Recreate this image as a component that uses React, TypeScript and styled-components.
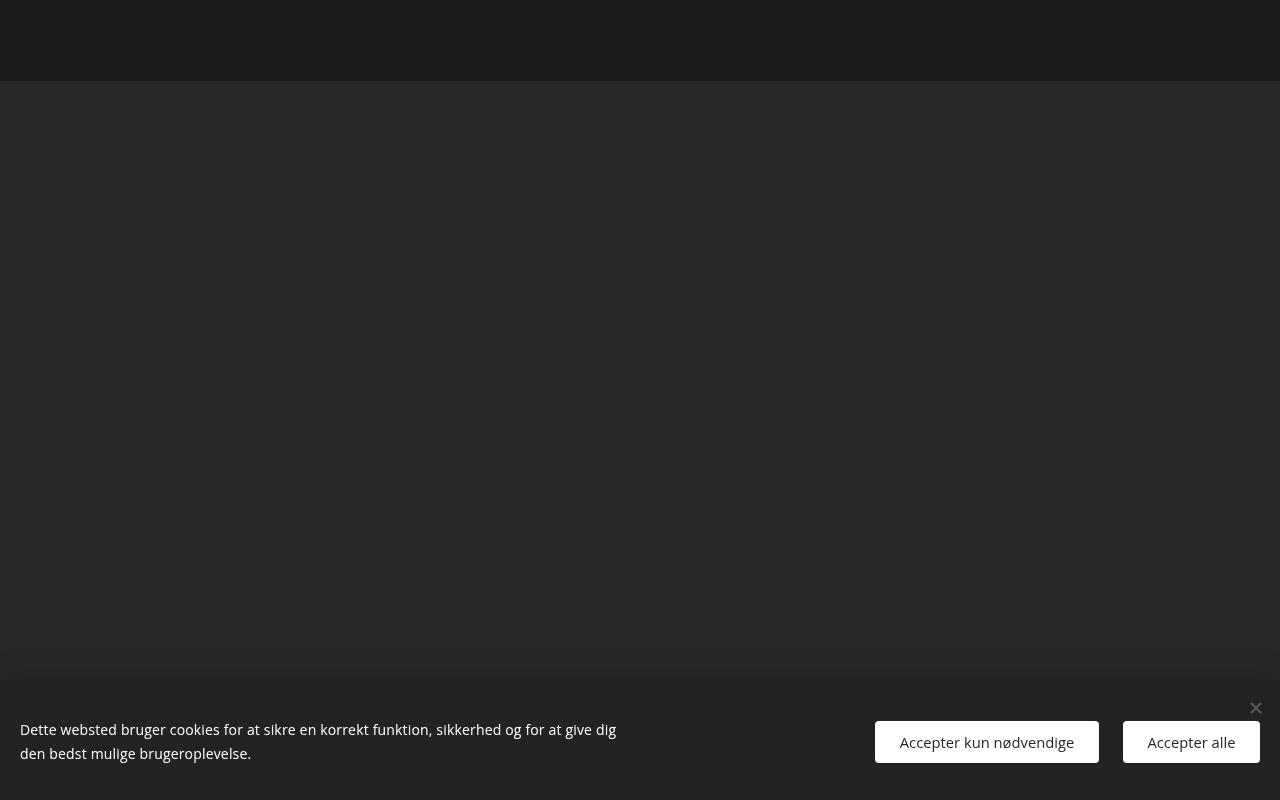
import React from 'react'
import styled, { createGlobalStyle } from 'styled-components'

const GlobalStyle = createGlobalStyle`
  html, body {
    margin: 0;
    padding: 0;
    background: #282828;
    font-family: "Open Sans", "Noto Sans", sans-serif;
  }
`

const App: React.FC = () => {
  return (
    <>
      <GlobalStyle />
      <StyledPage>
        <StyledHeader />
        <StyledMain />
      </StyledPage>
      <StyledCookieBar>
        <StyledCloseButton aria-label="Luk">
          <svg width="12" height="12" viewBox="0 0 12 12">
            <path d="M1 1L11 11M11 1L1 11" stroke="currentColor" strokeWidth="2" />
          </svg>
        </StyledCloseButton>
        <StyledCookieText>
          Dette websted bruger cookies for at sikre en korrekt funktion, sikkerhed og for at give dig
          den bedst mulige brugeroplevelse.
        </StyledCookieText>
        <StyledButtonGroup>
          <StyledButton $width={224}>Accepter kun nødvendige</StyledButton>
          <StyledButton $width={137}>Accepter alle</StyledButton>
        </StyledButtonGroup>
      </StyledCookieBar>
    </>
  )
}

const StyledPage = styled.div`
  display: flex;
  flex-direction: column;
  min-height: 100vh;
`

const StyledHeader = styled.header`
  height: 81px;
  background: #1b1b1b;
`

const StyledMain = styled.main`
  flex: 1;
  background: #282828;
`

const StyledCookieBar = styled.div`
  position: fixed;
  left: 0;
  right: 0;
  bottom: 0;
  height: 120px;
  box-sizing: border-box;
  padding: 0 20px;
  display: flex;
  align-items: center;
  justify-content: space-between;
  background: #232323;
  box-shadow: 0 -8px 24px rgba(0, 0, 0, 0.12);
`

const StyledCookieText = styled.p`
  margin: 4px 0 0;
  max-width: 610px;
  color: #ffffff;
  font-size: 14px;
  line-height: 24px;
  letter-spacing: 0.17px;
`

const StyledButtonGroup = styled.div`
  display: flex;
  gap: 24px;
  margin-top: 4px;
`

const StyledButton = styled.button<{ $width: number }>`
  width: ${(props) => props.$width}px;
  height: 42px;
  border: 0;
  border-radius: 4px;
  background: #ffffff;
  color: #262626;
  font-family: "Open Sans", "Noto Sans", sans-serif;
  font-size: 14.75px;
  cursor: pointer;
`

const StyledCloseButton = styled.button`
  position: absolute;
  top: 22px;
  right: 18px;
  width: 12px;
  height: 12px;
  padding: 0;
  border: 0;
  background: none;
  color: #5c5c5c;
  display: flex;
  cursor: pointer;
`

export default App
